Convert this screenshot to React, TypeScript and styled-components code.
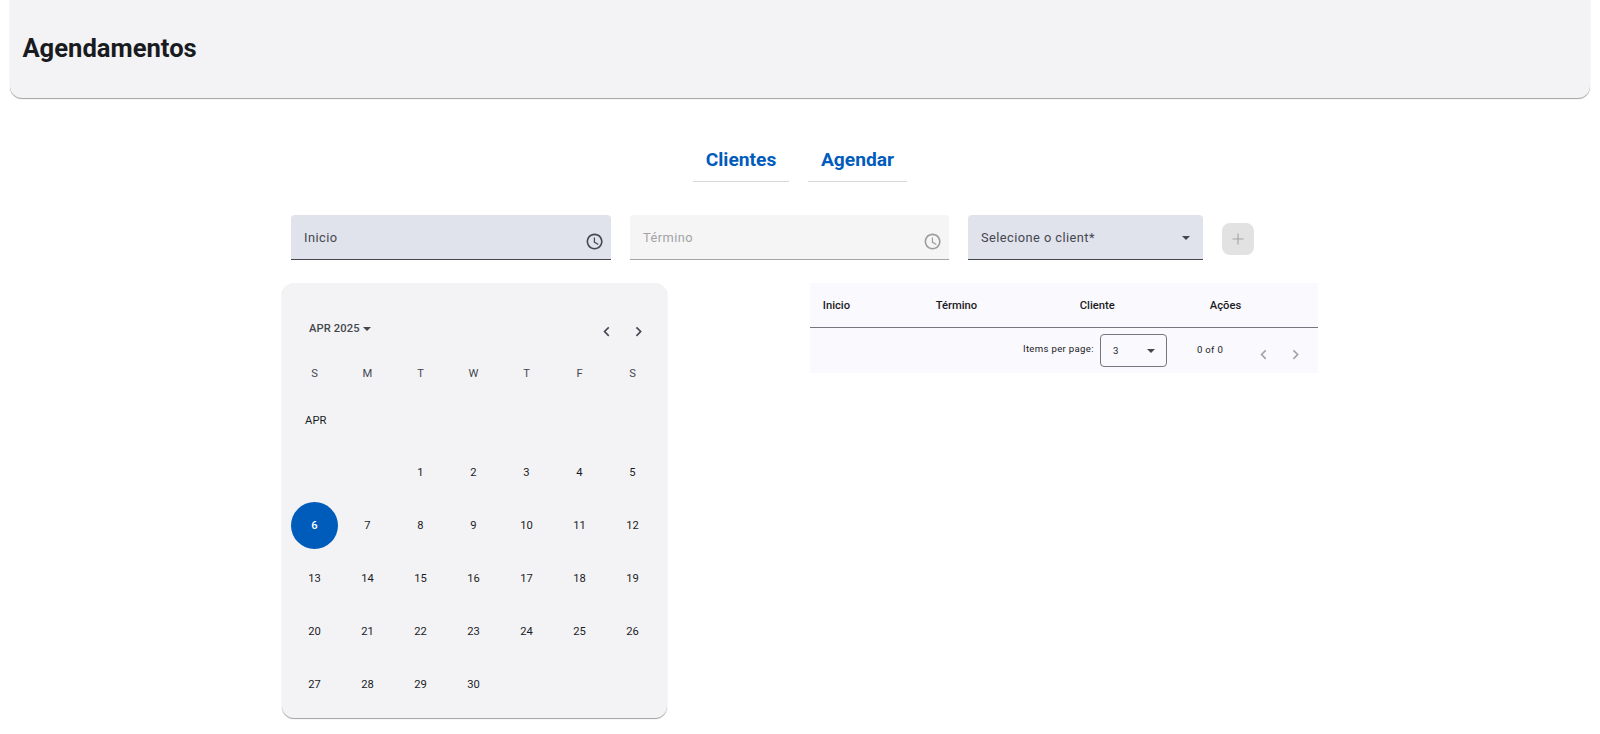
import React from "react";
import styled, { createGlobalStyle } from "styled-components";

const Global = createGlobalStyle`
  html, body { margin: 0; padding: 0; background: #fff; }
  body { font-family: Roboto, "Liberation Sans", sans-serif; color: #1a1b1f; }
`;

const Page = styled.div`
  width: 1600px;
  height: 734px;
  overflow: hidden;
`;
const Header = styled.header`
  margin: 0 10px;
  height: 98px;
  box-sizing: border-box;
  padding: 0 0 2px 12.4px;
  display: flex;
  align-items: center;
  background: #f3f3f6;
  border-radius: 0 0 12px 12px;
  box-shadow: 0 1px 1px rgba(0, 0, 0, 0.38);
`;
const Title = styled.h1`
  margin: 0;
  font-size: 25.6px;
  line-height: 32px;
  font-weight: 700;
  color: #1a1b1f;
`;
const Tabs = styled.nav`
  margin-top: 40px;
  display: flex;
  justify-content: center;
  gap: 19px;
`;
const Tab = styled.a<{ $w: number }>`
  width: ${(p) => p.$w}px;
  height: 44px;
  box-sizing: border-box;
  display: flex;
  align-items: flex-start;
  justify-content: center;
  padding-top: 10px;
  font-size: 19.2px;
  line-height: 24px;
  font-weight: 700;
  color: #005cbb;
  border-bottom: 1px solid #d9d9dc;
`;
const FormRow = styled.div`
  margin: 33px 0 0 291px;
  display: flex;
  align-items: flex-start;
  gap: 19px;
`;
const Field = styled.div<{ $w: number; $disabled?: boolean }>`
  position: relative;
  width: ${(p) => p.$w}px;
  height: 45px;
  box-sizing: border-box;
  padding: 13px 13px 0;
  border-radius: 4px 4px 0 0;
  font-size: 12.8px;
  line-height: 20px;
  letter-spacing: 0.45px;
  background: ${(p) => (p.$disabled ? "#f5f5f6" : "#e0e2ec")};
  color: ${(p) => (p.$disabled ? "#a3a3a6" : "#44474e")};
  border-bottom: 1px solid ${(p) => (p.$disabled ? "#a3a3a6" : "#44474e")};
`;
const FieldIcon = styled.svg<{ $muted?: boolean }>`
  position: absolute;
  right: 7px;
  top: 17px;
  width: 19.2px;
  height: 19.2px;
  fill: ${(p) => (p.$muted ? "#9c9c9f" : "#44474e")};
`;
const Arrow = styled.span`
  position: absolute;
  right: 13px;
  top: 21px;
  border-left: 4px solid transparent;
  border-right: 4px solid transparent;
  border-top: 4px solid #44474e;
`;
const PlusButton = styled.button`
  margin-top: 8px;
  width: 32px;
  height: 32px;
  padding: 0;
  border: none;
  border-radius: 8px;
  background: #e2e2e3;
  display: flex;
  align-items: center;
  justify-content: center;
`;
const Content = styled.div`
  margin: 23px 0 0 281.6px;
  display: flex;
  align-items: flex-start;
  gap: 143.4px;
`;
const Calendar = styled.section`
  width: 385px;
  height: 435px;
  box-sizing: border-box;
  padding: 0 9.4px;
  background: #f3f3f6;
  border-radius: 12px;
  box-shadow: 0 1px 1px rgba(0, 0, 0, 0.38);
`;
const CalHead = styled.div`
  height: 82px;
  box-sizing: border-box;
  padding: 36px 9px 0 18px;
  display: flex;
  align-items: flex-start;
  justify-content: space-between;
`;
const Period = styled.div`
  display: flex;
  align-items: center;
  gap: 3px;
  font-size: 11.2px;
  line-height: 20px;
  font-weight: 500;
  color: #44474e;
  letter-spacing: 0.1px;
`;
const PeriodArrow = styled.span`
  border-left: 4px solid transparent;
  border-right: 4px solid transparent;
  border-top: 4px solid #44474e;
`;
const CalNav = styled.div`
  display: flex;
  gap: 12.8px;
  margin-top: 3px;
`;
const Chevron = styled.svg<{ $muted?: boolean }>`
  width: 19.2px;
  height: 19.2px;
  fill: ${(p) => (p.$muted ? "#a3a3a6" : "#44474e")};
`;
const Grid = styled.div`
  display: grid;
  grid-template-columns: repeat(7, 47px);
  column-gap: 6px;
`;
const Dow = styled.div`
  height: 18px;
  line-height: 18px;
  text-align: center;
  font-size: 11.2px;
  font-weight: 400;
  color: #44474e;
`;
const MonthLabel = styled.div`
  grid-column: 1 / -1;
  height: 66px;
  box-sizing: border-box;
  padding: 30px 0 0 14px;
  font-size: 11.2px;
  line-height: 16px;
  font-weight: 400;
  letter-spacing: 0.1px;
  color: #1a1b1f;
`;
const Day = styled.div<{ $selected?: boolean }>`
  height: 47px;
  margin-bottom: 6px;
  border-radius: 50%;
  display: flex;
  align-items: center;
  justify-content: center;
  font-size: 11.2px;
  color: ${(p) => (p.$selected ? "#fff" : "#1a1b1f")};
  font-weight: ${(p) => (p.$selected ? 500 : 400)};
  background: ${(p) => (p.$selected ? "#005cbb" : "transparent")};
`;
const Table = styled.section`
  width: 508px;
  background: #faf9fd;
`;
const THead = styled.div`
  height: 45px;
  box-sizing: border-box;
  display: grid;
  grid-template-columns: 113px 144px 130px 121px;
  align-items: center;
  border-bottom: 1px solid #74777f;
`;
const Th = styled.div`
  padding-left: 12.8px;
  font-size: 11.2px;
  font-weight: 500;
  color: #1a1b1f;
`;
const TFoot = styled.div`
  height: 45px;
  display: flex;
  align-items: flex-start;
  padding-left: 213px;
`;
const PerPage = styled.div`
  margin-top: 13px;
  margin-right: 6px;
  font-size: 9.6px;
  line-height: 16px;
  letter-spacing: 0.32px;
  white-space: nowrap;
`;
const PageSelect = styled.div`
  position: relative;
  margin-top: 6px;
  width: 67px;
  height: 33px;
  box-sizing: border-box;
  border: 1px solid #74777f;
  border-radius: 4px;
  padding: 8px 12px;
  font-size: 9.6px;
  line-height: 16px;
`;
const PageArrow = styled(Arrow)`
  right: 11px;
  top: 14px;
`;
const Range = styled.div`
  margin: 14px 0 0 30px;
  width: 25px;
  font-size: 9.6px;
  line-height: 16px;
  letter-spacing: 0.32px;
  white-space: nowrap;
`;
const Pager = styled.div`
  margin: 17px 0 0 32px;
  display: flex;
  gap: 13.4px;
`;

const prev = "M15.41 7.41L14 6l-6 6 6 6 1.41-1.41L10.83 12z";
const next = "M10 6L8.59 7.41 13.17 12l-4.58 4.59L10 18l6-6z";
const clock =
  "M11.99 2C6.47 2 2 6.48 2 12s4.47 10 9.99 10C17.52 22 22 17.52 22 12S17.52 2 11.99 2zM12 20c-4.42 0-8-3.58-8-8s3.58-8 8-8 8 3.58 8 8-3.58 8-8 8zm.5-13H11v6l5.25 3.15.75-1.23-4.5-2.67z";

const dows = ["S", "M", "T", "W", "T", "F", "S"];

export default function App() {
  const days: (number | null)[] = [null, null];
  for (let i = 1; i <= 30; i++) days.push(i);
  return (
    <Page>
      <Global />
      <Header>
        <Title>Agendamentos</Title>
      </Header>
      <Tabs>
        <Tab $w={96}>Clientes</Tab>
        <Tab $w={99}>Agendar</Tab>
      </Tabs>
      <FormRow>
        <Field $w={320}>
          Inicio
          <FieldIcon viewBox="0 0 24 24"><path d={clock} /></FieldIcon>
        </Field>
        <Field $w={319} $disabled>
          Término
          <FieldIcon viewBox="0 0 24 24" $muted><path d={clock} /></FieldIcon>
        </Field>
        <Field $w={235}>
          Selecione o client*
          <Arrow />
        </Field>
        <PlusButton aria-label="Adicionar">
          <svg width="12" height="12" viewBox="0 0 12 12" fill="none" stroke="#a3a3a6" strokeWidth="1.1">
            <path d="M6 .5v11M.5 6h11" />
          </svg>
        </PlusButton>
      </FormRow>
      <Content>
        <Calendar>
          <CalHead>
            <Period>APR 2025 <PeriodArrow /></Period>
            <CalNav>
              <Chevron viewBox="0 0 24 24"><path d={prev} /></Chevron>
              <Chevron viewBox="0 0 24 24"><path d={next} /></Chevron>
            </CalNav>
          </CalHead>
          <Grid>
            {dows.map((d, i) => <Dow key={i}>{d}</Dow>)}
            <MonthLabel>APR</MonthLabel>
            {days.map((d, i) => <Day key={i} $selected={d === 6}>{d}</Day>)}
          </Grid>
        </Calendar>
        <Table>
          <THead>
            <Th>Inicio</Th>
            <Th>Término</Th>
            <Th>Cliente</Th>
            <Th>Ações</Th>
          </THead>
          <TFoot>
            <PerPage>Items per page:</PerPage>
            <PageSelect>3<PageArrow /></PageSelect>
            <Range>0 of 0</Range>
            <Pager>
              <Chevron viewBox="0 0 24 24" $muted><path d={prev} /></Chevron>
              <Chevron viewBox="0 0 24 24" $muted><path d={next} /></Chevron>
            </Pager>
          </TFoot>
        </Table>
      </Content>
    </Page>
  );
}
